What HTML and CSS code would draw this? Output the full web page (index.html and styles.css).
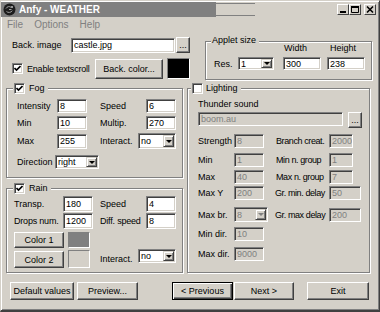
FILE: index.html
```html
<!DOCTYPE html>
<html lang="en">
<head>
<meta charset="utf-8">
<title>Anfy - WEATHER</title>
<link rel="stylesheet" href="styles.css">
</head>
<body>
<div class="win">
  <div class="titlebar">
    <div class="title">
      <svg class="logo" width="13" height="13" viewBox="0 0 13 13" aria-hidden="true">
        <circle cx="6.5" cy="6.5" r="6" fill="#1c1c1c"/>
        <path d="M3 5.5c1-2 3.5-2.5 5-1.2M3.5 8.5c1.5 1.5 4.5 1.2 5.8-.8M6 6.5h2.5" stroke="#a0a0a0" stroke-width="1" fill="none"/>
        <circle cx="9" cy="4" r="1" fill="#c0c0c0"/>
      </svg>
      <span class="title-text">Anfy - WEATHER</span>
    </div>
    <div class="title-tail"></div>
    <div class="wbtns">
      <span class="wbtn"><svg width="10" height="9" viewBox="0 0 10 9"><rect x="2" y="6" width="6" height="2" fill="#000"/></svg></span>
      <span class="wbtn"><svg width="10" height="9" viewBox="0 0 10 9"><path d="M1.5 1.5h7v6h-7z" fill="none" stroke="#000"/><rect x="1" y="1" width="8" height="2" fill="#000"/></svg></span>
      <span class="wbtn close"><svg width="10" height="9" viewBox="0 0 10 9"><path d="M2 1.5l6 6M8 1.5l-6 6" stroke="#000" stroke-width="1.6"/></svg></span>
    </div>
  </div>

  <div class="menubar"><span>File</span><span>Options</span><span>Help</span></div>

  <div class="top">
    <div class="top-left">
      <div class="row r-img">
        <span class="lbl w59">Back. image</span>
        <span class="field w104 h15">castle.jpg</span>
        <span class="btn w14 h16 ml1">...</span>
      </div>
      <div class="row r-scroll">
        <span class="check"><svg width="7" height="7" viewBox="0 0 7 7"><path d="M0.5 3l2 2 4-4" stroke="#000" stroke-width="1.6" fill="none"/></svg></span>
        <span class="lbl tight w68 ml4">Enable textscroll</span>
        <span class="btn w68 h20">Back. color...</span>
        <span class="swatch black w23 h21 ml4"></span>
      </div>
    </div>
    <div class="group applet">
      <div class="legend">Applet size</div>
      <div class="applet-heads"><span class="lbl head-w">Width</span><span class="lbl">Height</span></div>
      <div class="row applet-row">
        <span class="lbl w24">Res.</span>
        <span class="select w36 h13"><span class="sel-text">1</span><span class="sel-arrow"></span></span>
        <span class="field w38 h13 ml9">300</span>
        <span class="field w38 h13 ml6">238</span>
      </div>
    </div>
  </div>

  <div class="groups">
    <div class="col-left">
      <div class="group fog">
        <div class="legend">
          <span class="check"><svg width="7" height="7" viewBox="0 0 7 7"><path d="M0.5 3l2 2 4-4" stroke="#000" stroke-width="1.6" fill="none"/></svg></span>
          <span>Fog</span>
        </div>
        <div class="gbody fog-body">
          <div class="row h14 mt5">
            <span class="lbl w40">Intensity</span><span class="field w30 h14">8</span>
            <span class="lbl w46 ml13">Speed</span><span class="field w30 h14">6</span>
          </div>
          <div class="row h14 mt3">
            <span class="lbl w40">Min</span><span class="field w30 h14">10</span>
            <span class="lbl w46 ml13">Multip.</span><span class="field w30 h14">270</span>
          </div>
          <div class="row h16 mt3">
            <span class="lbl w40">Max</span><span class="field w30 h15">255</span>
            <span class="lbl w38 ml13">Interact.</span>
            <span class="select w38 h16"><span class="sel-text">no</span><span class="sel-arrow"></span></span>
          </div>
          <div class="row h14 mt6">
            <span class="lbl w38">Direction</span>
            <span class="select w44 h14"><span class="sel-text">right</span><span class="sel-arrow"></span></span>
          </div>
        </div>
      </div>

      <div class="group rain">
        <div class="legend">
          <span class="check"><svg width="7" height="7" viewBox="0 0 7 7"><path d="M0.5 3l2 2 4-4" stroke="#000" stroke-width="1.6" fill="none"/></svg></span>
          <span>Rain</span>
        </div>
        <div class="gbody rain-body">
          <div class="row h16 mt2">
            <span class="lbl w49">Transp.</span><span class="field w30 h16">180</span>
            <span class="lbl w46 ml7">Speed</span><span class="field w30 h16">4</span>
          </div>
          <div class="row h16 mt1">
            <span class="lbl tight w49">Drops num.</span><span class="field w30 h16">1200</span>
            <span class="lbl tight w46 ml7">Diff. speed</span><span class="field w30 h16">8</span>
          </div>
          <div class="row h16 mt3">
            <span class="btn w50 h16">Color 1</span>
            <span class="swatch gray w22 h16 ml4"></span>
          </div>
          <div class="row h19 mt1 top-align">
            <span class="btn w50 h17 mt2">Color 2</span>
            <span class="swatch light w22 h18 mt1 ml4"></span>
            <span class="lbl w38 ml10 mid">Interact.</span>
            <span class="select w38 h14"><span class="sel-text">no</span><span class="sel-arrow"></span></span>
          </div>
        </div>
      </div>
    </div>

    <div class="group lighting">
      <div class="legend">
        <span class="check"></span>
        <span>Lighting</span>
      </div>
      <div class="gbody light-body">
        <div class="lbl mt4 line">Thunder sound</div>
        <div class="row h16 mt2 top-align">
          <span class="field dis w145 h14">boom.au</span>
          <span class="btn w14 h16 ml5">...</span>
        </div>
        <div class="row h14 mt6">
          <span class="lbl w36">Strength</span><span class="field dis w30 h14">8</span>
          <span class="lbl tighter w53 ml12">Branch creat.</span><span class="field dis w24 h14">2000</span>
        </div>
        <div class="row h14 mt5">
          <span class="lbl w36">Min</span><span class="field dis w30 h14">1</span>
          <span class="lbl tighter w53 ml12">Min n. group</span><span class="field dis w24 h14">1</span>
        </div>
        <div class="row h14 mt3">
          <span class="lbl w36">Max</span><span class="field dis w30 h14">40</span>
          <span class="lbl tighter w53 ml12">Max n. group</span><span class="field dis w24 h14">7</span>
        </div>
        <div class="row h14 mt2">
          <span class="lbl w36">Max Y</span><span class="field dis w30 h14">200</span>
          <span class="lbl tighter w54 ml11">Gr. min. delay</span><span class="field dis w32 h14">50</span>
        </div>
        <div class="row h15 mt7">
          <span class="lbl w36">Max br.</span>
          <span class="select dis w34 h15"><span class="sel-text">8</span><span class="sel-arrow"></span></span>
          <span class="lbl tighter w54 ml7">Gr. max delay</span><span class="field dis w32 h14">200</span>
        </div>
        <div class="row h14 mt5">
          <span class="lbl w36">Min dir.</span><span class="field dis w30 h14">10</span>
        </div>
        <div class="row h14 mt6">
          <span class="lbl w36">Max dir.</span><span class="field dis w30 h14">9000</span>
        </div>
      </div>
    </div>
  </div>

  <div class="bbar">
    <span class="btn w64 h18">Default values</span>
    <span class="btn w61 h18 ml3">Preview...</span>
    <span class="btn default w61 h18 ml34">&lt; Previous</span>
    <span class="btn w60 h18 ml1">Next &gt;</span>
    <span class="btn w62 h18 ml13">Exit</span>
  </div>
</div>
</body>
</html>
```

FILE: styles.css
```css
* { box-sizing: border-box; }
html, body { margin: 0; padding: 0; background: #d4d0c8; }
body {
  font-family: "Liberation Sans", Arial, sans-serif;
  font-size: 9px;
  line-height: 12px;
  color: #000;
}

/* window frame */
.win {
  width: 380px;
  height: 312px;
  overflow: hidden;
  background: #d4d0c8;
  border-style: solid;
  border-width: 1px 1px 2px 1px;
  border-color: #d4d0c8 #404040 #404040 #d4d0c8;
  box-shadow: inset 1px 1px 0 #fff, inset -1px -1px 0 #808080;
  padding-top: 1px;
}

/* title bar */
.titlebar { display: flex; height: 15px; }
.title {
  display: flex;
  align-items: center;
  gap: 3px;
  width: 215px;
  padding-left: 2px;
  background: #808080;
}
.logo { flex: none; }
.title-text { color: #fff; font-weight: bold; font-size: 10px; white-space: nowrap; }
.title-tail {
  width: 39px;
  height: 13px;
  margin-top: 1px;
  border-top: 1px solid #808080;
  border-bottom: 1px solid #808080;
}
.wbtns { display: flex; height: 11px; margin: 2px 3px 0 auto; }
.wbtn {
  display: flex;
  align-items: center;
  justify-content: center;
  width: 12px;
  height: 11px;
  background: #d4d0c8;
  border: 1px solid;
  border-color: #fff #404040 #404040 #fff;
}
.wbtn.close { margin-left: 3px; }

/* menu */
.menubar {
  display: flex;
  align-items: center;
  gap: 11px;
  height: 15px;
  padding-left: 6px;
  font-size: 10px;
  color: #808080;
}

/* generic controls */
.row { display: flex; align-items: center; }
.row.top-align { align-items: flex-start; }
.mid { align-self: center; }
.lbl { flex: none; white-space: nowrap; }
.tight { letter-spacing: -0.2px; }
.tighter { letter-spacing: -0.4px; }
.line { height: 12px; }

.field {
  flex: none;
  display: flex;
  align-items: center;
  padding-left: 2px;
  background: #fff;
  border: 1px solid;
  border-color: #808080 #fff #fff #808080;
  box-shadow: inset 1px 1px 0 #404040, inset -1px -1px 0 #d4d0c8;
  white-space: nowrap;
  overflow: hidden;
}
.field.dis { background: #d4d0c8; color: #808080; }

.btn {
  flex: none;
  display: flex;
  align-items: center;
  justify-content: center;
  background: #d4d0c8;
  border: 1px solid;
  border-color: #fff #404040 #404040 #fff;
  box-shadow: inset -1px -1px 0 #808080;
  white-space: nowrap;
}
.btn.default {
  border-color: #000;
  box-shadow: inset 1px 1px 0 #fff, inset -1px -1px 0 #404040, inset -2px -2px 0 #808080;
}

.select {
  flex: none;
  display: flex;
  padding: 1px;
  background: #fff;
  border: 1px solid;
  border-color: #808080 #fff #fff #808080;
  box-shadow: inset 1px 1px 0 #404040, inset -1px -1px 0 #d4d0c8;
}
.sel-text { flex: 1; display: flex; align-items: center; padding-left: 1px; overflow: hidden; }
.sel-arrow {
  flex: none;
  width: 11px;
  display: flex;
  align-items: center;
  justify-content: center;
  background: #d4d0c8;
  border: 1px solid;
  border-color: #d4d0c8 #404040 #404040 #d4d0c8;
  box-shadow: inset 1px 1px 0 #fff, inset -1px -1px 0 #808080;
}
.sel-arrow::after {
  content: "";
  border-style: solid;
  border-width: 3px 3px 0 3px;
  border-color: #000 transparent transparent transparent;
}
.select.dis { background: #d4d0c8; color: #808080; }
.select.dis .sel-arrow::after { border-top-color: #808080; }

.check {
  flex: none;
  display: flex;
  align-items: center;
  justify-content: center;
  width: 11px;
  height: 11px;
  background: #fff;
  border: 1px solid;
  border-color: #808080 #fff #fff #808080;
  box-shadow: inset 1px 1px 0 #404040, inset -1px -1px 0 #d4d0c8;
}

.swatch {
  flex: none;
  border: 1px solid;
  border-color: #808080 #fff #fff #808080;
}
.swatch.black { background: #000; }
.swatch.gray { background: #808080; }
.swatch.light { background: #d4d0c8; }

/* group boxes */
.group {
  flex: none;
  border: 1px solid #808080;
  box-shadow: inset 1px 1px 0 #fff, 1px 1px 0 #fff;
}
.legend {
  display: flex;
  align-items: center;
  gap: 4px;
  width: max-content;
  height: 12px;
  margin: -7px 0 0 6px;
  padding: 0 3px 0 1px;
  background: #d4d0c8;
  white-space: nowrap;
}

/* top area */
.top { display: flex; height: 48px; }
.top-left { width: 204px; padding-left: 11px; }
.r-img { height: 16px; margin-top: 5px; }
.r-scroll { height: 21px; margin-top: 5px; }

.applet { width: 167px; height: 39px; margin-top: 9px; }
.applet .legend { margin: -8px 0 0 5px; }
.applet-heads { display: flex; height: 12px; margin-top: -4px; padding-left: 78px; }
.head-w { width: 46px; }
.applet-row { height: 13px; margin-top: 3px; padding-left: 8px; }

/* groups */
.groups { display: flex; gap: 4px; margin-top: 8px; padding-left: 5px; }
.col-left { width: 177px; display: flex; flex-direction: column; }
.fog { height: 90px; }
.rain { height: 85px; margin-top: 10px; }
.lighting { width: 183px; height: 185px; }
.lighting .legend { margin-left: 3px; gap: 3px; }
.fog-body { padding-left: 10px; }
.rain-body { padding-left: 7px; }
.light-body { padding-left: 10px; }

/* bottom bar */
.bbar { display: flex; height: 18px; margin-top: 9px; padding-left: 9px; }

/* sizes */
.w14 { width: 14px; } .w22 { width: 22px; } .w23 { width: 23px; } .w24 { width: 24px; }
.w30 { width: 30px; } .w32 { width: 32px; } .w34 { width: 34px; } .w36 { width: 36px; }
.w38 { width: 38px; } .w40 { width: 40px; } .w44 { width: 44px; } .w46 { width: 46px; }
.w49 { width: 49px; } .w50 { width: 50px; } .w53 { width: 53px; } .w54 { width: 54px; }
.w59 { width: 59px; }
.w60 { width: 60px; } .w61 { width: 61px; } .w62 { width: 62px; } .w64 { width: 64px; }
.w68 { width: 68px; } .w104 { width: 104px; } .w145 { width: 145px; }
.h13 { height: 13px; } .h14 { height: 14px; } .h15 { height: 15px; } .h16 { height: 16px; }
.h17 { height: 17px; } .h18 { height: 18px; } .h19 { height: 19px; } .h20 { height: 20px; }
.h21 { height: 21px; }
.mt1 { margin-top: 1px; } .mt2 { margin-top: 2px; } .mt3 { margin-top: 3px; } .mt4 { margin-top: 4px; }
.mt5 { margin-top: 5px; } .mt6 { margin-top: 6px; } .mt7 { margin-top: 7px; }
.ml1 { margin-left: 1px; } .ml3 { margin-left: 3px; } .ml4 { margin-left: 4px; } .ml5 { margin-left: 5px; }
.ml6 { margin-left: 6px; } .ml7 { margin-left: 7px; } .ml9 { margin-left: 9px; } .ml10 { margin-left: 10px; }
.ml11 { margin-left: 11px; } .ml12 { margin-left: 12px; } .ml13 { margin-left: 13px; } .ml34 { margin-left: 34px; }
```
